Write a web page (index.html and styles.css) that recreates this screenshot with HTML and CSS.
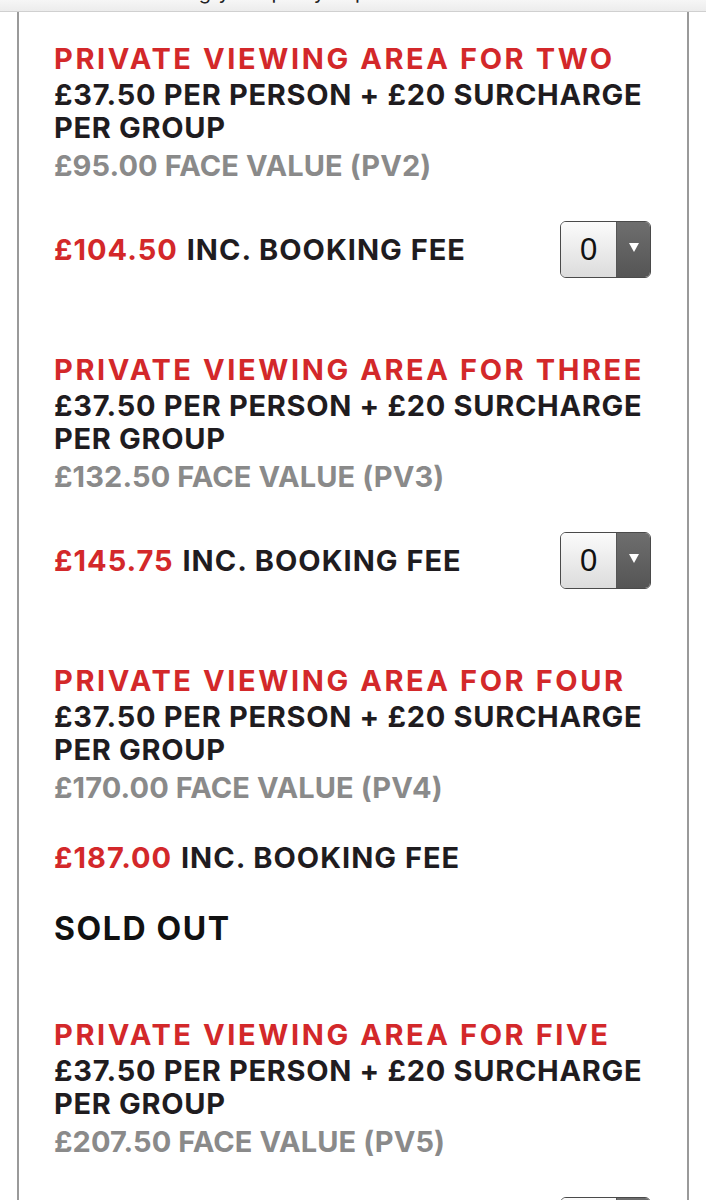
FILE: index.html
```html
<!DOCTYPE html>
<html lang="en">
<head>
<meta charset="utf-8">
<title>Private viewing areas</title>
<link rel="stylesheet" href="styles.css">
</head>
<body>
<header class="topbar"><span class="topbar-text">Booking your party trip</span></header>
<main class="panel">
  <section class="ticket">
    <h2 class="ticket-title">PRIVATE VIEWING AREA FOR TWO</h2>
    <p class="ticket-desc">£37.50 PER PERSON + £20 SURCHARGE PER GROUP</p>
    <p class="ticket-face">£95.00 FACE VALUE (PV2)</p>
    <div class="price-row">
      <p class="price"><span class="price-amount">£104.50</span> <span class="price-note">INC. BOOKING FEE</span></p>
      <div class="qty"><span class="qty-value">0</span><span class="qty-arrow"></span></div>
    </div>
  </section>
  <section class="ticket">
    <h2 class="ticket-title">PRIVATE VIEWING AREA FOR THREE</h2>
    <p class="ticket-desc">£37.50 PER PERSON + £20 SURCHARGE PER GROUP</p>
    <p class="ticket-face">£132.50 FACE VALUE (PV3)</p>
    <div class="price-row">
      <p class="price"><span class="price-amount">£145.75</span> <span class="price-note">INC. BOOKING FEE</span></p>
      <div class="qty"><span class="qty-value">0</span><span class="qty-arrow"></span></div>
    </div>
  </section>
  <section class="ticket">
    <h2 class="ticket-title">PRIVATE VIEWING AREA FOR FOUR</h2>
    <p class="ticket-desc">£37.50 PER PERSON + £20 SURCHARGE PER GROUP</p>
    <p class="ticket-face">£170.00 FACE VALUE (PV4)</p>
    <div class="price-row">
      <p class="price"><span class="price-amount">£187.00</span> <span class="price-note">INC. BOOKING FEE</span></p>
    </div>
    <p class="sold-out">SOLD OUT</p>
  </section>
  <section class="ticket">
    <h2 class="ticket-title">PRIVATE VIEWING AREA FOR FIVE</h2>
    <p class="ticket-desc">£37.50 PER PERSON + £20 SURCHARGE PER GROUP</p>
    <p class="ticket-face">£207.50 FACE VALUE (PV5)</p>
    <div class="price-row">
      <p class="price"><span class="price-amount">£228.25</span> <span class="price-note">INC. BOOKING FEE</span></p>
      <div class="qty"><span class="qty-value">0</span><span class="qty-arrow"></span></div>
    </div>
  </section>
</main>
</body>
</html>
```
FILE: styles.css
```css
* { box-sizing: border-box; }
html, body { margin: 0; padding: 0; background: #fff; }
body {
  font-family: Inter, "Liberation Sans", sans-serif;
  color: #1f1c1f;
  width: 706px;
  height: 1200px;
  overflow: hidden;
}
.topbar {
  height: 12px;
  background: linear-gradient(#f6f6f6, #ececec);
  border-bottom: 1px solid #d0d0d0;
  overflow: hidden;
  padding-left: 128px;
}
.topbar-text {
  display: block;
  font-size: 20px;
  line-height: 20px;
  margin-top: -18px;
  color: #222;
  letter-spacing: 1px;
}
.panel {
  margin: 0 17px;
  border-left: 2px solid #9a9a9a;
  border-right: 2px solid #9a9a9a;
  padding: 29px 36px 0 35px;
  min-height: 1300px;
}
.ticket { margin-bottom: 74px; }
.ticket p, .ticket h2 { margin: 0; }
.ticket-title {
  font-size: 29px;
  line-height: 36px;
  font-weight: 700;
  color: #d3282a;
  letter-spacing: 2.6px;
  margin-bottom: 1px !important;
  white-space: nowrap;
}
.ticket-desc {
  font-size: 29px;
  line-height: 33px;
  font-weight: 700;
  color: #1f1c1f;
  letter-spacing: 0.7px;
}
.ticket-face {
  font-size: 29px;
  line-height: 38px;
  font-weight: 700;
  color: #8a8a8a;
  letter-spacing: 0.1px;
  margin-top: 3px !important;
}
.price-row {
  margin-top: 36px;
  display: flex;
  align-items: center;
  justify-content: space-between;
}
.price {
  font-size: 29px;
  line-height: 29px;
  font-weight: 700;
}
.price-amount { color: #d3282a; letter-spacing: 1px; margin-right: 2px; }
.price-note { letter-spacing: 1px; }
.qty {
  display: flex;
  width: 91px;
  height: 57px;
  border: 1px solid #4a4a4a;
  border-radius: 6px;
  overflow: hidden;
}
.qty-value {
  width: 55px;
  background: linear-gradient(#fbfbfb, #dcdcdc);
  font-family: "Liberation Sans", sans-serif;
  font-weight: 400;
  font-size: 31px;
  display: flex;
  align-items: center;
  justify-content: center;
  color: #111;
}
.qty-arrow {
  flex: 1;
  background: linear-gradient(#6e6e6e, #555);
  border-left: 1px solid #555;
  display: flex;
  align-items: center;
  justify-content: center;
  padding-bottom: 4px;
}
.qty-arrow::before {
  content: "";
  width: 0;
  height: 0;
  border-left: 5px solid transparent;
  border-right: 5px solid transparent;
  border-top: 9px solid #fff;
}
.ticket .sold-out {
  margin-top: 43px;
  font-size: 32px;
  line-height: 28px;
  font-weight: 700;
  color: #111;
  letter-spacing: 1.6px;
}
```
